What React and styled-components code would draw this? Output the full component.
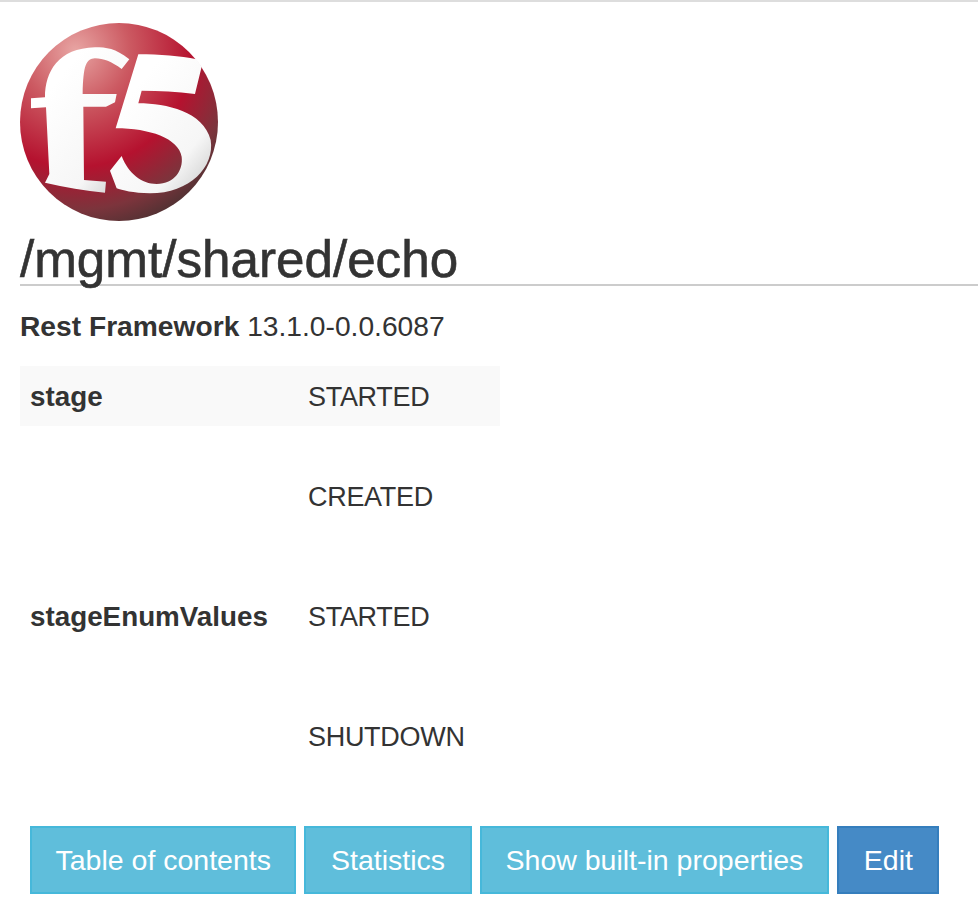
import styled, { createGlobalStyle } from "styled-components";

const GlobalStyle = createGlobalStyle`
  html, body {
    margin: 0;
    padding: 0;
    background: #fff;
  }
  body {
    font-family: "Liberation Sans", Arial, sans-serif;
    font-size: 27px;
    color: #333;
  }
`;

const Page = styled.div`
  width: 978px;
  height: 924px;
  box-sizing: border-box;
  border-top: 2px solid #ddd;
  padding: 20px 0 0 20px;
  overflow: hidden;
`;

const Logo = styled.svg`
  display: block;
  width: 200px;
  height: 200px;
`;

const Title = styled.h1`
  margin: 0;
  height: 62px;
  line-height: 76px;
  font-size: 51.2px;
  font-weight: 400;
  -webkit-text-stroke: 0.6px #333;
  border-bottom: 2px solid #ccc;
  white-space: nowrap;
`;

const Version = styled.p`
  margin: 25px 0 0;
  line-height: 30px;
  font-size: 28.2px;

  b {
    font-weight: 700;
  }
`;

const Props = styled.div`
  width: 480px;
  margin-top: 25px;
`;

const Row = styled.div`
  display: grid;
  grid-template-columns: 278px 1fr;
  align-items: center;
  padding: 11px 10px 9px;
  background: ${(p) => (p.$striped ? "#f9f9f9" : "transparent")};
`;

const Key = styled.div`
  font-size: 27.8px;
  font-weight: 700;
  line-height: 40px;
`;

const Value = styled.div`
  line-height: 40px;
  letter-spacing: -0.3px;
`;

const EnumValue = styled.div`
  height: 120px;
  display: flex;
  align-items: center;
`;

const Actions = styled.div`
  display: flex;
  gap: 8px;
  margin: 20px 0 0 10px;
`;

const Button = styled.button`
  box-sizing: border-box;
  height: 68px;
  padding: 0 ${(p) => p.$pad || 24}px;
  font-family: inherit;
  font-size: 28.5px;
  line-height: 1;
  color: #fff;
  background: ${(p) => (p.$primary ? "#458ac6" : "#5fbedb")};
  border: 2px solid ${(p) => (p.$primary ? "#357ebd" : "#46b8da")};
  border-radius: 0;
`;

const F5Logo = () => (
  <Logo viewBox="0 0 200 200">
    <defs>
      <radialGradient id="ball" cx="0.28" cy="0.14" r="0.98">
        <stop offset="0" stopColor="#e8a5a3" />
        <stop offset="0.28" stopColor="#cc5a62" />
        <stop offset="0.6" stopColor="#b5122f" />
        <stop offset="0.82" stopColor="#7c343c" />
        <stop offset="1" stopColor="#40302f" />
      </radialGradient>
      <linearGradient id="mark" x1="0.3" y1="0.2" x2="1" y2="1">
        <stop offset="0" stopColor="#ffffff" />
        <stop offset="0.65" stopColor="#f6f6f6" />
        <stop offset="1" stopColor="#c8c8c8" />
      </linearGradient>
    </defs>
    <circle cx="99" cy="100" r="99" fill="url(#ball)" />
    <g transform="translate(-20 -22) scale(0.3333)" fill="url(#mark)">
      <path d="M93 295 L135 292 C135 215 175 145 285 142 C320 142 345 145 388 178 L365 207 C335 185 310 175 285 175 C258 177 250 195 248 282 L350 282 L345 307 L318 320 L250 320 L252 540 L318 545 L315 578 C255 572 195 562 135 548 L148 522 L138 322 L93 325 Z" />
      <path d="M415 163 C480 163 540 168 590 178 L605 200 L585 282 C530 274 480 272 425 272 L415 310 C500 310 610 335 632 420 C645 500 570 580 450 580 C400 580 365 570 350 565 L330 512 L365 468 C385 520 425 552 470 552 C525 550 550 510 545 470 C535 415 450 385 347 385 Z" />
    </g>
  </Logo>
);

const App = () => (
  <Page>
    <GlobalStyle />
    <F5Logo />
    <Title>/mgmt/shared/echo</Title>
    <Version>
      <b>Rest Framework</b> 13.1.0-0.0.6087
    </Version>
    <Props>
      <Row $striped>
        <Key>stage</Key>
        <Value>STARTED</Value>
      </Row>
      <Row>
        <Key>stageEnumValues</Key>
        <Value>
          <EnumValue>CREATED</EnumValue>
          <EnumValue>STARTED</EnumValue>
          <EnumValue>SHUTDOWN</EnumValue>
        </Value>
      </Row>
    </Props>
    <Actions>
      <Button $pad={23.5}>Table of contents</Button>
      <Button $pad={24.5}>Statistics</Button>
      <Button>Show built-in properties</Button>
      <Button $primary $pad={24.5}>Edit</Button>
    </Actions>
  </Page>
);

export default App;
